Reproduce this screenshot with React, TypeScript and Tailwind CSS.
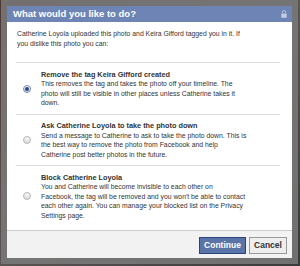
import React from "react";

const options = [
  {
    title: "Remove the tag Keira Gifford created",
    lines: [
      "This removes the tag and takes the photo off your timeline. The",
      "photo will still be visible in other places unless Catherine takes it",
      "down.",
    ],
    checked: true,
  },
  {
    title: "Ask Catherine Loyola to take the photo down",
    lines: [
      "Send a message to Catherine to ask to take the photo down. This is",
      "the best way to remove the photo from Facebook and help",
      "Catherine post better photos in the future.",
    ],
    checked: false,
  },
  {
    title: "Block Catherine Loyola",
    lines: [
      "You and Catherine will become invisible to each other on",
      "Facebook, the tag will be removed and you won't be able to contact",
      "each other again. You can manage your blocked list on the Privacy",
      "Settings page.",
    ],
    checked: false,
  },
];

function Radio({ checked }: { checked: boolean }) {
  return (
    <span
      className={
        "flex h-[8px] w-[8px] shrink-0 items-center justify-center rounded-full border " +
        (checked
          ? "border-[#7d8db0] bg-gradient-to-b from-[#f4f6fb] to-[#c9d1e3]"
          : "border-[#b4b4b4] bg-gradient-to-b from-[#fafafa] to-[#dcdcdc]")
      }
    >
      {checked ? <span className="h-[4px] w-[4px] rounded-full bg-[#2f4a82]" /> : null}
    </span>
  );
}

export default function App() {
  return (
    <div
      className="h-[266px] w-[300px] overflow-hidden bg-gradient-to-br from-[#4e3634] via-[#5a5452] to-[#3a3a3a] pl-px"
      style={{ fontFamily: '"Liberation Sans", Arial, sans-serif' }}
    >
      <div className="w-[297px] bg-[rgba(122,122,122,0.85)] p-[6px]">
        <div className="bg-white">
          <div className="flex h-[16px] items-center justify-between bg-[#6d84b4] pl-[6px] pr-[5px]">
            <span className="text-[9.5px] leading-none font-bold text-white">
              What would you like to do?
            </span>
            <svg width="6" height="8" viewBox="0 0 6 8" className="mt-[-1px]">
              <path d="M1.3 3.4V2.3a1.7 1.7 0 0 1 3.4 0v1.1" fill="none" stroke="#c3cce0" strokeWidth="0.9" />
              <rect x="0.3" y="3.4" width="5.4" height="4.3" rx="0.5" fill="#c3cce0" />
            </svg>
          </div>

          <div className="text-[6.85px] leading-[9.5px] whitespace-nowrap text-[#333]">
            <div className="pt-[7px] pl-[10px]">
              <div>Catherine Loyola uploaded this photo and Keira Gifford tagged you in it. If</div>
              <div>you dislike this photo you can:</div>
            </div>

            <div className="mt-[14px] ml-[9px] mr-[12px]">
              {options.map((o, i) => (
                <div
                  key={o.title}
                  className={
                    "flex items-center gap-[10px] border-t border-[#dedede] pt-[6.5px] pl-[7px] " +
                    (i === options.length - 1 ? "pb-[10px]" : "pb-[6px]")
                  }
                >
                  <Radio checked={o.checked} />
                  <div>
                    <div className="text-[7.3px] font-bold text-[#333]">{o.title}</div>
                    {o.lines.map((l) => (
                      <div key={l}>{l}</div>
                    ))}
                  </div>
                </div>
              ))}
            </div>
          </div>

          <div className="flex h-[28px] items-center justify-end gap-[3px] border-t border-[#cccccc] bg-[#f2f2f2] pr-[5px] pt-px">
            <button className="flex h-[17px] w-[47px] items-center justify-center border border-[#29447e] bg-[#5b74a8] text-[8.5px] font-bold text-white">
              Continue
            </button>
            <button className="flex h-[17px] w-[38px] items-center justify-center border border-[#999999] bg-[#eeeeee] text-[8.5px] font-bold text-[#333]">
              Cancel
            </button>
          </div>
        </div>
      </div>
    </div>
  );
}
